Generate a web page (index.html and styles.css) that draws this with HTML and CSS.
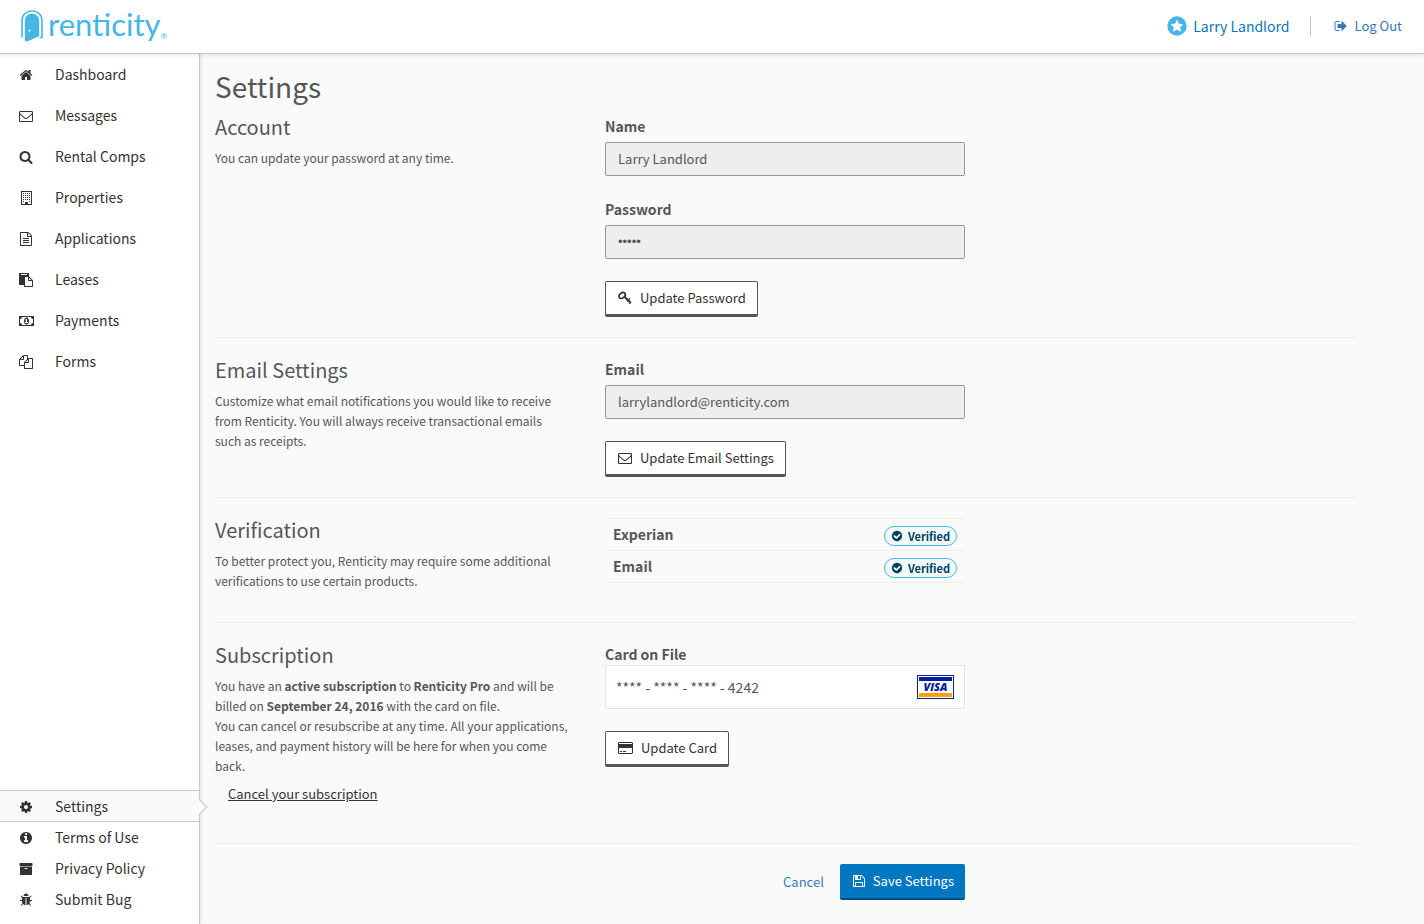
FILE: index.html
```html
<!DOCTYPE html>
<html lang="en">
<head>
<meta charset="utf-8">
<meta name="viewport" content="width=device-width, initial-scale=1">
<title>Settings - Renticity</title>
<link rel="stylesheet" href="styles.css">
</head>
<body>
<svg class="sprite" aria-hidden="true">
  <symbol id="home" viewBox="0 0 1792 1792"><path d="M1472 992v480q0 26-19 45t-45 19h-384v-384h-256v384h-384q-26 0-45-19t-19-45v-480q0-1 .5-3t.5-3l575-474 575 474q1 2 1 6zm223-69l-62 74q-8 9-21 11h-3q-13 0-21-7l-692-577-692 577q-12 8-24 7-13-2-21-11l-62-74q-8-10-7-23.5t11-21.5l719-599q32-26 76-26t76 26l244 204v-195q0-14 9-23t23-9h192q14 0 23 9t9 23v408l219 182q10 8 11 21.5t-7 23.5z"/></symbol>
  <symbol id="envelope" viewBox="0 0 1792 1792"><path d="M1664 1504v-768q-32 36-69 66-268 206-426 338-51 43-83 67t-86.5 48.5-102.5 24.5h-2q-48 0-102.5-24.5t-86.5-48.5-83-67q-158-132-426-338-37-30-69-66v768q0 13 9.5 22.5t22.5 9.5h1472q13 0 22.5-9.5t9.5-22.5zm0-1051v-24.5l-.5-13-3-12.5-5.5-9-9-7.5-14-2.5h-1472q-13 0-22.5 9.5t-9.5 22.5q0 168 147 284 193 152 401 317 6 5 35 29.5t46 37.5 44.5 31.5 50.5 27.5 43 9h2q20 0 43-9t50.5-27.5 44.5-31.5 46-37.5 35-29.5q208-165 401-317 54-43 100.5-115.5t46.5-131.5zm128-37v1088q0 66-47 113t-113 47h-1472q-66 0-113-47t-47-113v-1088q0-66 47-113t113-47h1472q66 0 113 47t47 113z"/></symbol>
  <symbol id="search" viewBox="0 0 1792 1792"><path d="M1216 832q0-185-131.5-316.5t-316.5-131.5-316.5 131.5-131.5 316.5 131.5 316.5 316.5 131.5 316.5-131.5 131.5-316.5zm512 832q0 52-38 90t-90 38q-54 0-90-38l-343-342q-179 124-399 124-143 0-273.5-55.5t-225-150-150-225-55.5-273.5 55.5-273.5 150-225 225-150 273.5-55.5 273.5 55.5 225 150 150 225 55.5 273.5q0 220-124 399l343 343q37 37 37 90z"/></symbol>
  <symbol id="building" viewBox="0 0 14 14"><path fill-rule="evenodd" d="M2 0h11v14H2zM3 1v12h3v-2h3v2h3V1z"/><path d="M4 2h1v1H4zm2 0h1v1H6zm2 0h1v1H8zm2 0h1v1h-1zM4 4h1v1H4zm2 0h1v1H6zm2 0h1v1H8zm2 0h1v1h-1zM4 6h1v1H4zm2 0h1v1H6zm2 0h1v1H8zm2 0h1v1h-1zM4 8h1v1H4zm2 0h1v1H6zm2 0h1v1H8zm2 0h1v1h-1zM4 10h1v1H4zm6 0h1v1h-1z"/></symbol>
  <symbol id="file" viewBox="0 0 1792 1792"><path d="M1596 380q28 28 48 76t20 88v1152q0 40-28 68t-68 28h-1344q-40 0-68-28t-28-68v-1600q0-40 28-68t68-28h896q40 0 88 20t76 48zm-444-244v376h376q-10-29-22-41l-313-313q-12-12-41-22zm384 1528v-1024h-416q-40 0-68-28t-28-68v-416h-768v1536h1280zm-1024-864q0-14 9-23t23-9h704q14 0 23 9t9 23v64q0 14-9 23t-23 9h-704q-14 0-23-9t-9-23v-64zm736 224q14 0 23 9t9 23v64q0 14-9 23t-23 9h-704q-14 0-23-9t-9-23v-64q0-14 9-23t23-9h704zm0 256q14 0 23 9t9 23v64q0 14-9 23t-23 9h-704q-14 0-23-9t-9-23v-64q0-14 9-23t23-9h704z"/></symbol>
  <symbol id="paste" viewBox="0 0 1792 1792"><path d="M768 1664h896v-640h-416q-40 0-68-28t-28-68v-416h-384v1152zm256-1440v-64q0-13-9.5-22.5t-22.5-9.5h-704q-13 0-22.5 9.5t-9.5 22.5v64q0 13 9.5 22.5t22.5 9.5h704q13 0 22.5-9.5t9.5-22.5zm256 672h299l-299-299v299zm512 128v672q0 40-28 68t-68 28h-960q-40 0-68-28t-28-68v-160h-544q-40 0-68-28t-28-68v-1344q0-40 28-68t68-28h1088q40 0 68 28t28 68v328q21 13 36 28l408 408q28 28 48 76t20 88z"/></symbol>
  <symbol id="money" viewBox="0 0 15 14"><path fill-rule="evenodd" d="M0 2h15v10H0zM3 3a2 2 0 0 1-2 2v4a2 2 0 0 1 2 2h9a2 2 0 0 1 2-2V5a2 2 0 0 1-2-2z"/><path fill-rule="evenodd" d="M7.500 3.500C9.200 3.500 10 5.300 10 7s-.8 3.500-2.500 3.500S5 8.700 5 7s.8-3.500 2.500-3.500zM7 5L6 6l.4.600.6-.4V8H6v1h3V8H8V5z"/></symbol>
  <symbol id="files" viewBox="0 0 1792 1792"><path d="M1696 384q40 0 68 28t28 68v1216q0 40-28 68t-68 28h-960q-40 0-68-28t-28-68v-288h-544q-40 0-68-28t-28-68v-672q0-40 20-88t48-76l408-408q28-28 76-48t88-20h416q40 0 68 28t28 68v328q68-40 128-40h416zm-544 213l-299 299h299v-299zm-640-384l-299 299h299v-299zm196 647l316-316v-416h-384v416q0 40-28 68t-68 28h-416v640h512v-256q0-40 20-88t48-76zm956 804v-1152h-384v416q0 40-28 68t-68 28h-416v640h896z"/></symbol>
  <symbol id="cog" viewBox="0 0 1792 1792"><path d="M1152 896q0-106-75-181t-181-75-181 75-75 181 75 181 181 75 181-75 75-181zm512-109v222q0 12-8 23t-20 13l-185 28q-19 54-39 91 35 50 107 138 10 12 10 25t-9 23q-27 37-99 108t-94 71q-12 0-26-9l-138-108q-44 23-91 38-16 136-29 186-7 28-36 28h-222q-14 0-24.500-8.500t-11.500-21.500l-28-184q-49-16-90-37l-141 107q-10 9-25 9-14 0-25-11-126-114-165-168-7-10-7-23 0-12 8-23 15-21 51-66.500t54-70.500q-27-50-41-99l-183-27q-13-2-21-12.500t-8-23.500v-222q0-12 8-23t19-13l186-28q14-46 39-92-40-57-107-138-10-12-10-24 0-10 9-23 26-36 98.500-107.500t94.500-71.500q13 0 26 10l138 107q44-23 91-38 16-136 29-186 7-28 36-28h222q14 0 24.500 8.500t11.500 21.500l28 184q49 16 90 37l142-107q9-9 24-9 13 0 25 10 129 119 165 170 7 8 7 22 0 12-8 23-15 21-51 66.500t-54 70.500q26 50 41 98l183 28q13 2 21 12.500t8 23.500z"/></symbol>
  <symbol id="info" viewBox="0 0 1792 1792"><path d="M1152 1376v-160q0-14-9-23t-23-9h-96v-512q0-14-9-23t-23-9h-320q-14 0-23 9t-9 23v160q0 14 9 23t23 9h96v320h-96q-14 0-23 9t-9 23v160q0 14 9 23t23 9h448q14 0 23-9t9-23zm-128-896v-160q0-14-9-23t-23-9h-192q-14 0-23 9t-9 23v160q0 14 9 23t23 9h192q14 0 23-9t9-23zm640 416q0 209-103 385.500t-279.500 279.500-385.500 103-385.500-103-279.500-279.500-103-385.500 103-385.500 279.500-279.500 385.500-103 385.500 103 279.500 279.500 103 385.500z"/></symbol>
  <symbol id="archive" viewBox="0 0 1792 1792"><path d="M1088 832q0-26-19-45t-45-19h-256q-26 0-45 19t-19 45 19 45 45 19h256q26 0 45-19t19-45zm576-192v960q0 26-19 45t-45 19h-1408q-26 0-45-19t-19-45v-960q0-26 19-45t45-19h1408q26 0 45 19t19 45zm64-448v256q0 26-19 45t-45 19h-1536q-26 0-45-19t-19-45v-256q0-26 19-45t45-19h1536q26 0 45 19t19 45z"/></symbol>
  <symbol id="bug" viewBox="0 0 1792 1792"><path d="M1696 960q0 26-19 45t-45 19h-224q0 171-67 290l208 209q19 19 19 45t-19 45q-18 19-45 19t-45-19l-198-197q-5 5-15 13t-42 28.500-65 36.500-82 29-97 13v-896h-128v896q-51 0-101.500-13.500t-87-33-66-39-43.500-32.500l-15-14-183 207q-20 21-48 21-24 0-43-16-19-18-20.500-44.500t15.500-46.500l202-227q-58-114-58-274h-224q-26 0-45-19t-19-45 19-45 45-19h224v-294l-173-173q-19-19-19-45t19-45 45-19 45 19l173 173h844l173-173q19-19 45-19t45 19 19 45-19 45l-173 173v294h224q26 0 45 19t19 45zm-480-576h-640q0-133 93.500-226.500t226.500-93.500 226.500 93.500 93.500 226.500z"/></symbol>
  <symbol id="sign-out" viewBox="0 0 1792 1792"><path d="M704 1440q0 4 1 20t.5 26.500-3 23.500-10 19.500-20.500 6.500h-320q-119 0-203.500-84.500t-84.500-203.500v-704q0-119 84.500-203.500t203.500-84.500h320q13 0 22.500 9.500t9.500 22.500q0 4 1 20t.5 26.500-3 23.500-10 19.500-20.500 6.500h-320q-66 0-113 47t-47 113v704q0 66 47 113t113 47h312l11.500 1 11.500 3 8 5.500 7 9 2 13.500zm928-544q0 26-19 45l-544 544q-19 19-45 19t-45-19-19-45v-288h-448q-26 0-45-19t-19-45v-384q0-26 19-45t45-19h448v-288q0-26 19-45t45-19 45 19l544 544q19 19 19 45z"/></symbol>
  <symbol id="check" viewBox="0 0 1792 1792"><path d="M1412 734q0-28-18-46l-91-90q-19-19-45-19t-45 19l-408 407-226-226q-19-19-45-19t-45 19l-91 90q-18 18-18 46 0 27 18 45l362 362q19 19 45 19 27 0 46-19l543-543q18-18 18-45zm252 162q0 209-103 385.500t-279.500 279.500-385.500 103-385.500-103-279.500-279.500-103-385.500 103-385.500 279.500-279.500 385.500-103 385.500 103 279.500 279.500 103 385.500z"/></symbol>
  <symbol id="save" viewBox="0 0 1792 1792"><path d="M512 1536h768v-384h-768v384zm896 0h128v-896q0-14-10-38.500t-20-34.500l-281-281q-10-10-34-20t-39-10v416q0 40-28 68t-68 28h-576q-40 0-68-28t-28-68v-416h-128v1280h128v-416q0-40 28-68t68-28h832q40 0 68 28t28 68v416zm-384-928v-320q0-13-9.500-22.500t-22.500-9.500h-192q-13 0-22.500 9.500t-9.500 22.500v320q0 13 9.500 22.500t22.500 9.500h192q13 0 22.500-9.500t9.500-22.500zm640 32v928q0 40-28 68t-68 28h-1344q-40 0-68-28t-28-68v-1344q0-40 28-68t68-28h928q40 0 88 20t76 48l280 280q28 28 48 76t20 88z"/></symbol>
  <symbol id="key" viewBox="0 0 14 14"><g fill="none" stroke="currentColor"><path stroke-width="1.700" d="M1 5.900C.7 4.800 1.300 3.600 2.500 2.600S5.600 1.300 6.500 2s1 2.200.1 3.400-2.500 2.100-3.700 2.100S1.200 6.900 1 5.900z"/><path stroke-width="1.900" d="M6.100 5.500l6.700 6.300M8.900 10.100l1.500-1.600M11.300 12.700l1.200-1.300"/><path stroke-width="1.300" d="M10.500 8.400l1.600-1"/></g></symbol>
  <symbol id="card" viewBox="0 0 15 14"><path fill-rule="evenodd" d="M1 1h13l1 1v10l-1 1H1l-1-1V2zm0 1v1h13V2zm0 5v5h13V7z"/><path d="M2 10h2v1H2zm3 0h3v1H5z"/></symbol>
</svg>

<header class="topbar">
  <a class="brand" href="#">
    <svg class="brand-mark" viewBox="0 0 22 32" aria-hidden="true">
      <path d="M1 27.500V10.800C1 4.500 5.300 1 11 1s10 3.500 10 9.800v16.700h-2.500" fill="none" stroke="currentColor" stroke-width="1.600"/>
      <path fill="currentColor" fill-rule="evenodd" d="M3.800 29.800V11c0-4.600 3-7.200 7.200-7.200s7.200 2.600 7.200 7.200v15.300L6.500 31.300c-1.500.5-2.700-.1-2.700-1.500zM8.500 19.500a1.100 1.100 0 1 0 0 2.200 1.100 1.100 0 0 0 0-2.200z"/>
    </svg>
    <span class="brand-name">renticity</span><span class="brand-reg">®</span>
  </a>
  <nav class="user-nav" aria-label="User">
    <a class="user" href="#">
      <svg class="star" viewBox="0 0 20 20" aria-hidden="true"><circle cx="10" cy="10" r="9.700" fill="#47b5e6"/><path fill="#fff" stroke="#fff" stroke-linejoin="round" d="M10 4.600l1.600 3.500 3.900.5-2.900 2.600.8 3.900-3.400-2-3.400 2 .8-3.900-2.900-2.600 3.900-.5z"/></svg>
      Larry Landlord</a>
    <a class="logout" href="#"><svg class="icon"><use href="#sign-out"/></svg>Log Out</a>
  </nav>
</header>

<div class="shell">
  <nav class="sidebar" aria-label="Main">
    <ul class="menu">
      <li><a href="#"><svg class="icon"><use href="#home"/></svg>Dashboard</a></li>
      <li><a href="#"><svg class="icon"><use href="#envelope"/></svg>Messages</a></li>
      <li><a href="#"><svg class="icon"><use href="#search"/></svg>Rental Comps</a></li>
      <li><a href="#"><svg class="icon"><use href="#building"/></svg>Properties</a></li>
      <li><a href="#"><svg class="icon"><use href="#file"/></svg>Applications</a></li>
      <li><a href="#"><svg class="icon"><use href="#paste"/></svg>Leases</a></li>
      <li><a href="#"><svg class="icon icon-wide"><use href="#money"/></svg>Payments</a></li>
      <li><a href="#"><svg class="icon"><use href="#files"/></svg>Forms</a></li>
    </ul>
    <ul class="menu menu-compact">
      <li class="active"><a href="#" aria-current="page"><svg class="icon"><use href="#cog"/></svg>Settings</a></li>
      <li><a href="#"><svg class="icon"><use href="#info"/></svg>Terms of Use</a></li>
      <li><a href="#"><svg class="icon"><use href="#archive"/></svg>Privacy Policy</a></li>
      <li><a href="#"><svg class="icon"><use href="#bug"/></svg>Submit Bug</a></li>
    </ul>
  </nav>

  <main class="content">
    <h1>Settings</h1>
    <form>
      <section class="row">
        <div>
          <h2>Account</h2>
          <p>You can update your password at any time.</p>
        </div>
        <div>
          <div class="field">
            <label for="name">Name</label>
            <input class="input" id="name" type="text" value="Larry Landlord" readonly>
          </div>
          <div class="field">
            <label for="password">Password</label>
            <input class="input input-password" id="password" type="password" value="12345" readonly>
          </div>
          <button class="btn" type="button"><svg class="icon"><use href="#key"/></svg>Update Password</button>
        </div>
      </section>

      <section class="row">
        <div>
          <h2>Email Settings</h2>
          <p>Customize what email notifications you would like to receive from Renticity. You will always receive transactional emails such as receipts.</p>
        </div>
        <div>
          <div class="field">
            <label for="email">Email</label>
            <input class="input" id="email" type="email" value="larrylandlord@renticity.com" readonly>
          </div>
          <button class="btn" type="button"><svg class="icon"><use href="#envelope"/></svg>Update Email Settings</button>
        </div>
      </section>

      <section class="row">
        <div>
          <h2>Verification</h2>
          <p>To better protect you, Renticity may require some additional verifications to use certain products.</p>
        </div>
        <div>
          <table class="checks">
            <tr><th scope="row">Experian</th><td><span class="badge"><svg class="badge-icon"><use href="#check"/></svg>Verified</span></td></tr>
            <tr><th scope="row">Email</th><td><span class="badge"><svg class="badge-icon"><use href="#check"/></svg>Verified</span></td></tr>
          </table>
        </div>
      </section>

      <section class="row">
        <div>
          <h2>Subscription</h2>
          <p>You have an <strong>active subscription</strong> to <strong>Renticity Pro</strong> and will be billed on <strong>September 24, 2016</strong> with the card on file.</p>
          <p>You can cancel or resubscribe at any time. All your applications, leases, and payment history will be here for when you come back.</p>
          <a class="cancel-sub" href="#">Cancel your subscription</a>
        </div>
        <div>
          <h3 class="card-label">Card on File</h3>
          <div class="card-box">
            <span>**** - **** - **** - 4242</span>
            <span class="visa"><span class="visa-face">VISA</span></span>
          </div>
          <button class="btn" type="button"><svg class="icon icon-wide"><use href="#card"/></svg>Update Card</button>
        </div>
      </section>

      <div class="row actions">
        <div></div>
        <div class="action-group">
          <a class="cancel" href="#">Cancel</a>
          <button class="btn btn-primary" type="submit"><svg class="icon"><use href="#save"/></svg>Save Settings</button>
        </div>
      </div>
    </form>
  </main>
</div>
</body>
</html>
```
FILE: styles.css
```css
* {
  box-sizing: border-box;
}

body {
  display: flex;
  flex-direction: column;
  min-height: 100vh;
  margin: 0;
  background: #fafafa;
  color: #54575a;
  font: 13px/20px "Noto Sans CJK SC", "Open Sans", sans-serif;
}

a {
  color: #337ab7;
  text-decoration: none;
}

.sprite {
  display: none;
}

.icon {
  flex: none;
  width: 14px;
  height: 14px;
  fill: currentColor;
}

.icon-wide {
  width: 15px;
}

/* Top bar */

.topbar {
  position: relative;
  z-index: 2;
  display: flex;
  align-items: center;
  justify-content: space-between;
  height: 54px;
  padding: 0 22px 2px 21px;
  border-bottom: 1px solid #c8c8c8;
  background: #fff;
  box-shadow: 0 1px 4px rgba(0, 0, 0, 0.12);
}

.brand {
  display: flex;
  align-items: center;
  color: #47b5e6;
}

.brand-mark {
  width: 22px;
  height: 32px;
  margin-right: 5px;
}

.brand-name {
  padding-bottom: 4px;
  font: 31px/36px Lato, sans-serif;
}

.brand-reg {
  align-self: flex-end;
  padding-bottom: 4px;
  font: 8px/12px Lato, sans-serif;
}

.user-nav,
.user,
.logout {
  display: flex;
  align-items: center;
}

.user {
  padding-right: 20px;
  border-right: 1px solid #c8c8c8;
  color: #0a76bb;
  font-size: 14px;
}

.star {
  width: 20px;
  height: 20px;
  margin-right: 6px;
}

.logout {
  gap: 7px;
  padding-left: 23px;
}

/* Sidebar */

.shell {
  display: flex;
  flex: 1;
}

.sidebar {
  position: relative;
  z-index: 1;
  display: flex;
  flex: none;
  flex-direction: column;
  justify-content: space-between;
  width: 200px;
  padding-bottom: 9px;
  border-right: 1px solid #c8c8c8;
  background: #fff;
  box-shadow: 1px 0 4px rgba(0, 0, 0, 0.12);
}

.menu {
  margin: 0;
  padding: 0;
  list-style: none;
}

.menu a {
  display: grid;
  grid-template-columns: 36px 1fr;
  align-items: center;
  height: 41px;
  padding: 0 0 1px 19px;
  color: #333;
  font-size: 14px;
}

.menu .icon {
  margin-top: 2px;
}

.menu-compact a {
  height: 31px;
}

.menu-compact .active {
  position: relative;
  height: 32px;
  border: solid #c8c8c8;
  border-width: 1px 0;
  background: #fafafa;
}

.active::after {
  position: absolute;
  top: 10px;
  right: -6px;
  width: 11px;
  height: 11px;
  border: solid #c8c8c8;
  border-width: 1px 1px 0 0;
  background: #fafafa;
  content: "";
  transform: rotate(45deg);
}

/* Content */

.content {
  flex: 1;
  min-width: 0;
  padding: 13px 67px 24px 15px;
}

h1 {
  margin: 0 0 10px;
  font-size: 28px;
  font-weight: 400;
  line-height: 38px;
}

h2 {
  margin: 0 0 9px;
  font-size: 20px;
  font-weight: 400;
  line-height: 24px;
}

p {
  margin: 0;
  padding-right: 6px;
  font-size: 12px;
}

.row {
  display: grid;
  grid-template-columns: repeat(3, minmax(0, 1fr));
  gap: 30px;
  padding: 20px 2px 20px 0;
  border-bottom: 1px solid #eee;
}

.row:first-child {
  padding-top: 0;
}

.field {
  margin-bottom: 22px;
}

label,
.card-label {
  display: block;
  margin: 0 0 6px;
  padding-top: 1px;
  font-size: 14px;
  font-weight: 700;
  line-height: 20px;
}

.card-label {
  margin-bottom: 1px;
}

.input {
  display: block;
  width: 100%;
  height: 34px;
  padding: 5px 12px 7px;
  border: 1px solid #999;
  border-radius: 2px;
  background: #eee;
  color: #54575a;
  font: inherit;
}

.input-password {
  font-family: "Liberation Sans", sans-serif;
}

.btn {
  display: inline-flex;
  align-items: center;
  gap: 8px;
  height: 36px;
  padding: 0 11px 0 12px;
  border: 1px solid #54575a;
  border-bottom-width: 3px;
  border-radius: 2px;
  background: #fff;
  color: #333;
  font: inherit;
}

.checks {
  width: 100%;
  margin-bottom: 19px;
  border-collapse: collapse;
}

.checks tr {
  height: 32px;
  border: solid #eee;
  border-width: 1px 0;
}

.checks th {
  padding: 0 8px 1px;
  font-size: 14px;
  text-align: left;
}

.checks td {
  padding: 2px 8px 0;
  text-align: right;
}

.badge {
  display: inline-flex;
  align-items: center;
  gap: 5px;
  height: 20px;
  padding: 0 6px 1px;
  border: 1px solid #47b5e6;
  border-radius: 10px;
  background: #f4fbff;
  color: #004165;
  font-size: 11px;
  font-weight: 700;
  vertical-align: middle;
}

.badge-icon {
  width: 12px;
  height: 12px;
  fill: currentColor;
}

.card-box {
  display: flex;
  align-items: center;
  justify-content: space-between;
  height: 44px;
  margin-bottom: 22px;
  padding: 0 10px;
  border: 1px solid #e4e4e4;
  border-radius: 2px;
  background: #fff;
  font-size: 14px;
}

.visa {
  width: 37px;
  height: 24px;
  padding: 1px;
  border: 1px solid #00209f;
  background: #fff;
}

.visa-face {
  display: block;
  height: 20px;
  border: solid #00209f;
  border-width: 4px 0;
  border-bottom-color: #f9a100;
  color: #00209f;
  font: italic 800 11px/12px "Open Sans", sans-serif;
  text-align: center;
}

.cancel-sub {
  display: inline-block;
  margin: 1px 0 12px;
  padding: 7px 13px;
  color: #333;
  text-decoration: underline;
}

.actions {
  border: 0;
  padding-bottom: 0;
}

.action-group {
  display: flex;
  align-items: center;
  justify-content: flex-end;
  gap: 16px;
}

.btn-primary {
  gap: 7px;
  border: 0;
  border-bottom: 2px solid #004f7f;
  background: #0077c0;
  color: #fff;
}
```
